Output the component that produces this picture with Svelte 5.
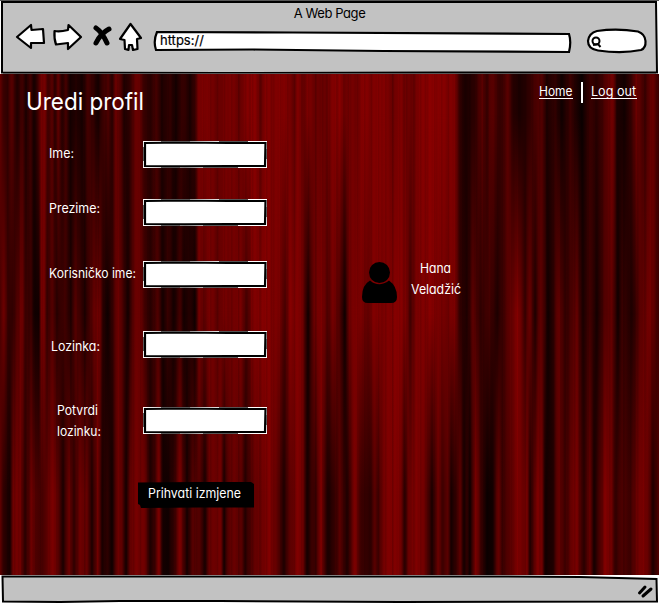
<script>
  // Curtain folds: [x, red level] pairs, one list for each height of the cloth.
  const folds = {
    top: [[0,110],[3,60],[7,50],[12,90],[17,30],[22,70],[26,25],[30,70],[34,20],[38,60],[41,120],[45,115],[48,60],[52,95],[55,40],[58,100],[62,40],[66,70],[70,20],[76,35],[82,20],[88,70],[93,50],[98,20],[103,60],[108,80],[112,40],[116,110],[120,90],[124,30],[130,50],[135,100],[140,110],[143,60],[150,40],[156,70],[162,30],[170,50],[176,20],[183,60],[190,25],[195,60],[198,115],[205,130],[212,115],[220,105],[228,125],[235,115],[240,100],[246,130],[255,135],[261,95],[265,130],[275,125],[283,135],[290,115],[295,100],[298,130],[303,100],[308,125],[315,105],[320,105],[327,105],[333,130],[340,135],[345,105],[350,120],[357,110],[362,135],[372,125],[383,135],[393,105],[400,130],[405,110],[413,105],[420,130],[430,138],[440,135],[455,125],[460,50],[465,25],[475,45],[482,95],[487,50],[491,100],[500,50],[508,90],[513,40],[520,25],[530,50],[536,80],[542,80],[547,30],[555,50],[562,15],[570,60],[577,25],[582,10],[590,60],[597,40],[605,80],[613,120],[617,30],[625,20],[632,60],[636,110],[645,60],[652,110],[659,60]],
    middle: [[0,80],[4,110],[9,50],[13,50],[22,120],[25,60],[31,60],[34,20],[39,15],[41,120],[44,120],[47,50],[52,90],[57,40],[64,70],[71,30],[75,90],[80,60],[85,30],[91,80],[95,110],[100,110],[103,40],[108,15],[113,60],[118,120],[124,60],[128,20],[134,100],[140,115],[144,70],[150,40],[158,80],[163,20],[168,60],[174,20],[180,70],[184,20],[190,40],[195,15],[199,115],[204,95],[209,120],[214,110],[218,95],[225,120],[232,110],[240,125],[247,65],[252,125],[265,135],[280,120],[285,70],[290,135],[302,125],[308,15],[314,110],[322,125],[328,80],[333,120],[338,95],[345,15],[349,115],[360,130],[368,95],[372,130],[385,125],[400,138],[407,120],[410,60],[415,120],[430,135],[445,115],[455,125],[460,50],[467,30],[473,95],[480,50],[490,70],[497,30],[508,90],[518,135],[525,60],[530,110],[535,30],[540,100],[545,60],[548,15],[553,40],[558,110],[565,50],[570,70],[577,100],[583,25],[590,70],[597,20],[604,80],[612,100],[618,15],[622,60],[632,30],[640,90],[650,120],[659,60]],
    bottom: [[0,110],[3,50],[10,20],[13,110],[20,120],[25,40],[31,110],[38,70],[45,80],[52,130],[57,100],[63,30],[69,110],[74,50],[80,110],[87,100],[92,30],[98,120],[102,25],[107,50],[112,15],[118,120],[122,90],[126,20],[130,100],[137,120],[145,110],[150,30],[155,60],[159,130],[163,20],[168,15],[175,60],[180,130],[184,70],[187,20],[193,90],[200,80],[205,25],[209,100],[217,115],[221,110],[224,20],[228,90],[235,105],[242,85],[245,35],[249,70],[255,100],[262,110],[270,130],[276,100],[279,80],[284,30],[288,80],[298,130],[303,110],[307,20],[312,60],[316,60],[321,130],[325,60],[328,25],[334,50],[340,90],[347,30],[355,130],[361,60],[370,45],[375,90],[378,60],[383,115],[390,130],[400,125],[405,40],[408,100],[415,130],[425,110],[432,25],[438,110],[443,60],[448,100],[451,20],[457,60],[460,100],[464,20],[467,50],[470,15],[476,130],[481,60],[487,10],[493,20],[498,110],[502,60],[510,90],[518,130],[522,110],[527,120],[530,30],[537,130],[542,110],[545,20],[553,30],[558,110],[565,60],[572,110],[577,120],[584,40],[590,110],[594,20],[598,60],[605,130],[612,110],[615,50],[622,80],[630,60],[637,110],[645,125],[650,80],[653,30],[659,90]]
  };
  const cloth = (list) =>
    `linear-gradient(90deg, ${list.map(([x, r]) => `rgb(${r},0,0) ${x}px`).join(', ')})`;

  const fields = [
    { id: 'ime', lines: ['Ime:'], left: 0, width: 25 },
    { id: 'prezime', lines: ['Prezime:'], left: 0, width: 51 },
    { id: 'korisnicko', lines: ['Korisničko ime:'], left: 0, width: 87 },
    { id: 'lozinka', lines: ['Lozinka:'], left: 2, width: 49 },
    { id: 'potvrdi', lines: ['Potvrdi', 'lozinku:'], left: 8, width: 44 }
  ];
</script>

<div class="browser">
  <header>
    <svg class="frame" width="659" height="74" viewBox="0 0 659 74">
      <path d="M2 2 L330 2 L656 2 L657 72.500 L440 72.500 L220 73 L2 72.500 Z" fill="#c2c2c2" stroke="#000" stroke-width="2" />
      <path d="M0 .5H659M3 73.500H656" stroke="#555" stroke-width="1" />
    </svg>
    <div class="title">A Web Page</div>
    <div class="tools">
      <svg class="nav" width="130" height="32" viewBox="0 0 130 32" fill="#fff" stroke="#000" stroke-width="2.200" stroke-linejoin="round">
        <path d="M2 16 L16 4 L16.500 9 L28 8 L29 22 L16 22 L16 27 Z" />
        <path d="M39.500 10 Q45 11 53 9 L53.500 4 L66 16 L53 28 L53 22 L41 23.500 Q39 18 39.500 10 Z" />
        <path d="M81 7 Q87 11 92 22 M94 8 Q86 12 81 22" fill="none" stroke-width="5" stroke-linecap="round" />
        <path d="M115.500 3 L126 17 L122 18 L122.500 28 L118 29 L117 24 L114 24 L113.500 29 L110 28 L109.500 19 L105 18 Z" />
      </svg>
      <div class="address">
        <svg width="420" height="24" viewBox="0 0 420 24">
          <path d="M4 3 L140 3.500 L416 5 Q418.500 13 416 23 L230 22 L100 20.500 L3 21 Q0 12 4 3 Z" fill="#fff" stroke="#000" stroke-width="2.200" />
        </svg>
        <span>https://</span>
      </div>
      <svg class="search" width="62" height="28" viewBox="0 0 62 28">
        <path d="M11 4 Q31 1 52 4.500 Q59 7 59.500 14 Q60 21 55 23 Q36 27 12 23.500 Q2 22 2 14 Q3 6 11 4 Z" fill="#fff" stroke="#000" stroke-width="2.200" />
        <circle cx="10" cy="14" r="3.500" fill="#fff" stroke="#000" stroke-width="2" />
        <path d="M7 18 L12 17 L14.500 20" fill="none" stroke="#000" stroke-width="2" />
      </svg>
    </div>
  </header>

  <main>
    <div class="cloth" style:background={cloth(folds.middle)}></div>
    <div class="cloth upper" style:background={cloth(folds.top)}></div>
    <div class="cloth lower" style:background={cloth(folds.bottom)}></div>
    <div class="cloth weave"></div>

    <section class="edit">
      <h1><svg width="150" height="34"><text x="2" y="26" textLength="118" lengthAdjust="spacingAndGlyphs">Uredi profil</text></svg></h1>
      <form>
        {#each fields as field (field.id)}
          <div class="row {field.id}">
            <label for={field.id} style:padding-left={`${field.left}px`}>
              {#each field.lines as line}
                <svg width="94" height="21"><text x="0" y="15" textLength={line === 'Potvrdi' ? 41 : field.width} lengthAdjust="spacingAndGlyphs">{line}</text></svg>
              {/each}
            </label>
            <div class="box">
              <svg width="124" height="27" viewBox="0 0 124 27">
                <path d="M0 0H124V27H0Z" fill="#fff" />
                <path d="M2 2 L40 1.500 L85 2 L122.500 2 L122 25 L85 25 L42 25.300 L2 25 Z" fill="#fff" stroke="#000" stroke-width="2.200" />
                <path d="M18 .5H47M76 .5H105M18 26.500H37M60 26.500H95M.5 6V20M123.500 8V18" stroke="#555" />
              </svg>
              <input id={field.id} type="text" />
            </div>
          </div>
        {/each}
        <button type="button">
          <svg width="117" height="27" viewBox="0 0 117 27">
            <path d="M0 .5 L60 0 L113 0 L116 2 V25.500 L60 25.500 L3 26 L2 23 L0 22 Z" />
            <text x="10" y="16" textLength="93" lengthAdjust="spacingAndGlyphs">Prihvati izmjene</text>
          </svg>
        </button>
      </form>
    </section>

    <section class="side">
      <nav>
        <a href="#home"><svg width="34" height="21"><text x="0" y="15" textLength="33.500" lengthAdjust="spacingAndGlyphs">Home</text></svg></a>
        <i></i>
        <a href="#logout"><svg width="46" height="21"><text x="0" y="15" textLength="45" lengthAdjust="spacingAndGlyphs">Log out</text></svg></a>
      </nav>
      <div class="user">
        <svg width="36" height="44" viewBox="0 0 36 44">
          <circle cx="17.500" cy="11.500" r="10.500" />
          <path d="M8 19.500 Q17 27 27 19.500 Q35 25 35 36 Q35 42 29 42 H6 Q0 42 0 36 Q0 24 8 19.500 Z" />
        </svg>
        <div class="name">
          <svg width="52" height="21"><text x="9" y="15" textLength="31" lengthAdjust="spacingAndGlyphs">Hana</text></svg>
          <svg width="52" height="21"><text x="0" y="15" textLength="50" lengthAdjust="spacingAndGlyphs">Veladžić</text></svg>
        </div>
      </div>
    </section>
  </main>

  <footer>
    <svg width="659" height="29" viewBox="0 0 659 29">
      <path d="M2.500 1.500 L300 1.500 L500 1.500 L580 2 L656.500 4 L657 26.500 L400 27 L220 26 L120 26 L60 27 L3 26.500 Z" fill="#c2c2c2" stroke="#000" stroke-width="2" />
      <path d="M639.500 18 L645 12 M643 21 L651 14" stroke="#000" stroke-width="3" stroke-linecap="round" />
    </svg>
  </footer>
</div>

<style>
  :global(body) { margin: 0; background: #fff; overflow: hidden; }
  .browser { width: 659px; height: 604px; display: flex; flex-direction: column; font: 13px/21px Inter, "Noto Sans", sans-serif; font-feature-settings: "cv11"; color: #000; }
  svg { display: block; overflow: visible; }
  svg text { fill: #fff; stroke: none; }
  header { height: 74px; position: relative; display: flex; flex-direction: column; flex: none; }
  .frame { position: absolute; inset: 0; }
  .title { position: relative; text-align: center; height: 21px; line-height: 21px; padding-top: 3px; font-size: 13px; letter-spacing: -.4px; }
  .tools { position: relative; display: flex; align-items: flex-start; padding-left: 15px; }
  .nav { margin-top: -3px; }
  .address { position: relative; margin: 5px 0 0 8px; }
  .address span { position: absolute; left: 7px; top: 1px; -webkit-text-stroke: .2px #000; }
  .search { margin: 3px 0 0 13px; }
  main { height: 501px; position: relative; display: flex; overflow: hidden; flex: none; }
  .cloth { position: absolute; inset: 0; }
  .upper { mask-image: linear-gradient(#000 0, #000 40px, transparent 240px); }
  .lower { mask-image: linear-gradient(transparent 240px, #000 420px); }
  .weave { background: repeating-linear-gradient(90deg, rgba(0,0,0,.09) 0 1px, transparent 2px 4px, rgba(0,0,0,.05) 5px, transparent 7px), repeating-linear-gradient(90deg, transparent 0 6px, rgba(0,0,0,.1) 8px, transparent 9px 11px); }
  section { position: relative; }
  .edit { width: 300px; }
  h1 { margin: 10px 0 0 24px; font-size: 24px; line-height: 34px; font-weight: 400; height: 34px; }
  form { display: flex; flex-direction: column; padding-left: 49px; }
  .row { display: flex; align-items: center; height: 27px; }
  .row label { width: 94px; box-sizing: border-box; }
  .ime { margin-top: 23px; }
  .prezime { margin-top: 31px; }
  .korisnicko { margin-top: 35px; }
  .lozinka { margin-top: 43px; }
  .potvrdi { margin-top: 49px; }
  .ime label { margin-top: -2px; }
  .prezime label { margin-top: -8px; }
  .korisnicko label { margin-top: -2px; }
  .lozinka label { margin-top: 3px; }
  .box { position: relative; width: 124px; height: 27px; flex: none; }
  input { position: absolute; inset: 4px; width: 116px; height: 19px; border: 0; padding: 0 4px; box-sizing: border-box; background: transparent; outline: 0; }
  button { align-self: flex-start; margin: 48px 0 0 89px; border: 0; padding: 0; background: none; font: inherit; font-feature-settings: inherit; }
  .side { flex: 1; }
  nav { display: flex; padding: 7px 0 0 239px; }
  a { height: 17px; border-bottom: 1px solid #fff; }
  nav i { width: 2px; height: 21px; background: #fff; margin: 1px 8px 0; }
  .user { display: flex; margin: 158px 0 0 62px; }
  .name { margin: -3px 0 0 13px; }
</style>
